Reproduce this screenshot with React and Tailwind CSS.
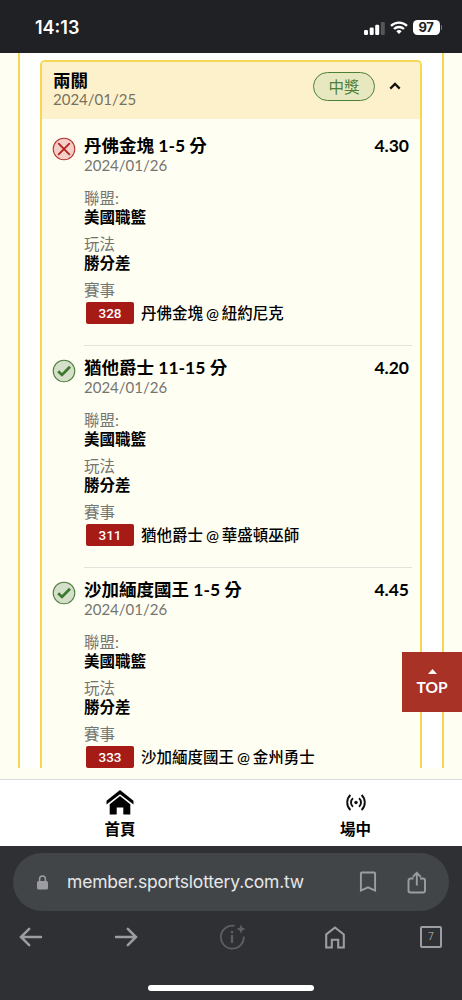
import { Fragment } from 'react';

const legs = [
  { id: 1, hit: false, title: '丹佛金塊 1-5 分', odds: '4.30', code: '328', match: '丹佛金塊 @ 紐約尼克' },
  { id: 2, hit: true, title: '猶他爵士 11-15 分', odds: '4.20', code: '311', match: '猶他爵士 @ 華盛頓巫師' },
  { id: 3, hit: true, title: '沙加緬度國王 1-5 分', odds: '4.45', code: '333', match: '沙加緬度國王 @ 金州勇士' },
];

function StatusBar() {
  return (
    <div className="h-[53px] shrink-0 bg-[#202124] flex items-center justify-between pl-[35px] pr-[20px] pt-[2px] text-white font-['Inter',sans-serif]">
      <span className="text-[18px] leading-6 font-semibold">14:13</span>
      <div className="flex items-center">
        <svg width="21" height="14" viewBox="0 0 21 14" fill="#fff" className="mr-[5px]">
          <rect x="0" y="9" width="4" height="5" rx="1.2" />
          <rect x="5.7" y="6.6" width="4" height="7.4" rx="1.2" />
          <rect x="11.2" y="3.8" width="4" height="10.2" rx="1.2" />
          <rect x="16.8" y="1" width="4" height="13" rx="1.2" fill="#55565a" />
        </svg>
        <svg width="18" height="13" viewBox="0 0 18 13" fill="none" stroke="#fff" strokeWidth="2.3" className="mr-[5px]">
          <path d="M1 4.9a11.6 11.6 0 0 1 16 0" />
          <path d="M4 8a7.2 7.2 0 0 1 10 0" />
          <path d="M9 13 6.3 10.2a3.9 3.9 0 0 1 5.4 0z" fill="#fff" stroke="none" />
        </svg>
        <span className="w-[27px] h-[15px] rounded-[4.5px] bg-white text-[#202124] text-[13px] leading-[15px] font-bold text-center tracking-[-0.3px]">
          97
        </span>
        <span className="ml-px w-[1.5px] h-[5px] rounded-r bg-[#77787b]" />
      </div>
    </div>
  );
}

function ResultIcon({ hit }) {
  return (
    <svg width="24" height="24" viewBox="0 0 24 24" fill="none" className="shrink-0 mt-[13px]">
      <circle cx="12" cy="12" r="10.8" fill={hit ? '#d5dfc9' : '#f3cfc8'} stroke={hit ? '#4e8040' : '#b5332c'} strokeWidth="1.1" />
      {hit ? (
        <path d="m6.2 12.2 3.8 3.7 8-8.1" stroke="#3a7a2d" strokeWidth="2.8" />
      ) : (
        <path d="m6.2 6.2 11.6 11.6M17.8 6.2 6.2 17.8" stroke="#b3241e" strokeWidth="1.9" />
      )}
    </svg>
  );
}

function Field({ label, value }) {
  return (
    <Fragment>
      <div className="text-[15.5px] leading-[19px] text-[#757570]">{label}</div>
      <div className="text-[15.5px] leading-[19px] font-bold text-black mb-[8px]">{value}</div>
    </Fragment>
  );
}

function Leg({ leg, last }) {
  return (
    <div className="flex h-[222px] pl-[10px] pr-[8px]">
      <ResultIcon hit={leg.hit} />
      <div className={`ml-[8px] flex-1 h-full pt-[11px] border-b ${last ? 'border-transparent' : 'border-[#e4e4df]'}`}>
        <div className="flex justify-between pr-[3px] text-[17.5px] leading-[22px] font-bold text-black">
          <span className="whitespace-nowrap">{leg.title}</span>
          <span>{leg.odds}</span>
        </div>
        <div className="text-[15px] leading-[16px] text-[#757570]">2024/01/26</div>
        <div className="mt-[16px]">
          <Field label="聯盟:" value="美國職籃" />
          <Field label="玩法" value="勝分差" />
          <div className="text-[15.5px] leading-[18px] text-[#757570]">賽事</div>
        </div>
        <div className="flex items-center mt-[3px] ml-[2px]">
          <span className="w-12 h-[22px] rounded-[2px] bg-[#a61b16] text-white text-[13.5px] leading-[22px] font-medium text-center font-['Roboto',sans-serif]">
            {leg.code}
          </span>
          <span className="ml-[7px] text-[15.5px] leading-[22px] font-medium text-black whitespace-nowrap [word-spacing:-1px]">
            {leg.match}
          </span>
        </div>
      </div>
    </div>
  );
}

function BetCard() {
  return (
    <div className="mx-5 mt-[7px] h-[708px] overflow-hidden border-2 border-b-0 border-[#f4d855] rounded-t-[5px] bg-[#fffef3]">
      <div className="h-[57px] bg-[#fdf1cc] flex items-start justify-between pl-[11px] pr-[18px] pt-[8px]">
        <div>
          <div className="text-[17.5px] leading-[21px] font-bold text-black">兩關</div>
          <div className="text-[15px] leading-[16px] text-[#77725f]">2024/01/25</div>
        </div>
        <div className="flex items-center mt-[2px]">
          <span className="w-[62px] h-[29px] rounded-full border border-[#4b8038] bg-[#e8e8c0] text-[#4b8038] text-[15.5px] leading-[28px] text-center">
            中獎
          </span>
          <svg width="12" height="8" viewBox="0 0 12 8" fill="none" stroke="#111" strokeWidth="2.2" className="ml-[14px] mr-px -mt-[2px]">
            <path d="m1.3 6.6 4.7-4.7 4.7 4.7" />
          </svg>
        </div>
      </div>
      <div className="pt-[5px]">
        {legs.map((leg, i) => (
          <Leg key={leg.id} leg={leg} last={i === legs.length - 1} />
        ))}
      </div>
    </div>
  );
}

function TabBar() {
  return (
    <div className="h-[67px] shrink-0 grid grid-cols-2 border-t border-[#dcdcdc] bg-white text-black text-[15.5px] leading-5 font-bold">
      <div className="flex flex-col items-center pl-[9px] pt-[10px]">
        <svg width="28" height="25" viewBox="0 0 28 25">
          <path d="M14 0 .5 10.8v3.8L14 4.2l13.5 10.4v-3.8z" />
          <path d="M14 6 3.7 14.2v10.3h7v-7h6.6v7h7V14.2z" />
        </svg>
        <span className="mt-[4px]">首頁</span>
      </div>
      <div className="flex flex-col items-center pl-[18px] pt-[14px]">
        <svg width="20" height="17" viewBox="0 0 20 17" fill="none" stroke="#111" strokeWidth="1.9">
          <circle cx="10" cy="8.5" r="1.7" fill="#111" stroke="none" />
          <path d="M7 4.200a5.600 5.600 0 0 0 0 8.600M13 4.200a5.600 5.600 0 0 1 0 8.600" />
          <path d="M4.400 1a10.400 10.400 0 0 0 0 15M15.600 1a10.400 10.400 0 0 1 0 15" />
        </svg>
        <span className="mt-[8px]">場中</span>
      </div>
    </div>
  );
}

function BrowserBar() {
  return (
    <div className="h-[154px] shrink-0 bg-[#2f3034] pt-[7px] px-[13px] flex flex-col text-[#9b9da3]">
      <div className="h-[58px] rounded-full bg-[#424548] flex items-center pl-[24px] pr-[22px]">
        <svg width="11" height="15" viewBox="0 0 11 15" fill="none">
          <path d="M2.6 7V3.8a2.9 2.9 0 0 1 5.8 0V7" stroke="#9b9da3" strokeWidth="1.5" />
          <rect y="6" width="11" height="8.5" rx="1.6" fill="#9b9da3" />
        </svg>
        <span className="ml-[19px] flex-1 text-[17.5px] leading-6 tracking-[-0.2px] text-[#e6e7e9] font-['Inter',sans-serif] whitespace-nowrap">
          member.sportslottery.com.tw
        </span>
        <svg width="18" height="22" viewBox="0 0 18 22" fill="none" stroke="currentColor" strokeWidth="1.9" className="mr-[30px]">
          <path d="M1.900 2.500a1 1 0 0 1 1-1h12.200a1 1 0 0 1 1 1v17l-7.100-3.100-7.100 3.100z" />
        </svg>
        <svg width="20" height="23" viewBox="0 0 20 23" fill="none" stroke="currentColor" strokeWidth="1.9">
          <path d="M6.500 7.500H3.500a2 2 0 0 0-2 2V19.500a2 2 0 0 0 2 2h12.500a2 2 0 0 0 2-2V9.500a2 2 0 0 0-2-2H13M9.800 14.500V2M5.800 5.800l4-4 4 4" />
        </svg>
      </div>
      <div className="mt-[13px] h-[26px] flex items-center justify-between pl-[6px] pr-[7px]">
        <svg width="24" height="20" viewBox="0 0 24 20" fill="none" stroke="currentColor" strokeWidth="2.5" strokeLinecap="round">
          <path d="M22 10H2.500M10.200 1.800 2 10l8.200 8.200" />
        </svg>
        <svg width="24" height="20" viewBox="0 0 24 20" fill="none" stroke="currentColor" strokeWidth="2.5" strokeLinecap="round" className="ml-[9px]">
          <path d="M2 10h19.500M13.800 1.800 22 10l-8.200 8.200" />
        </svg>
        <svg width="27" height="26" viewBox="0 0 27 26" fill="none" stroke="#5d5f64" strokeWidth="1.8" className="ml-[19px]">
          <path d="M15.500 1.900A11.500 11.500 0 1 0 24.800 12.500" />
          <path d="M13 11v8M13 7v2.200" strokeWidth="2.3" />
          <path d="m22 .5 1.300 3.300 3.300 1.300-3.300 1.300L22 9.700l-1.300-3.300-3.300-1.300 3.300-1.300z" fill="#5d5f64" stroke="none" />
        </svg>
        <svg width="20" height="23" viewBox="0 0 20 23" fill="none" stroke="currentColor" strokeWidth="2.1" className="ml-[18px]">
          <path d="M1.200 8.400 10 1.500l8.800 6.900v13.100h-5.600v-7.700H6.800v7.700H1.200z" />
        </svg>
        <span className="w-[22px] h-[22px] ml-[13px] rounded-[2px] border-2 border-current text-[10.5px] leading-[18px] text-center font-['Roboto',sans-serif]">
          7
        </span>
      </div>
      <div className="mt-[35px] mx-auto w-[166px] h-[6px] rounded-full bg-white" />
    </div>
  );
}

export default function App() {
  return (
    <div className="relative w-[462px] h-[1000px] overflow-hidden flex flex-col bg-[#fffef3] font-['Lato','Noto_Sans_CJK_TC',sans-serif]">
      <StatusBar />
      <div className="h-[726px] shrink-0">
        <div className="mx-[18px] h-[715px] border-x-2 border-[#f4d855] bg-white flow-root">
          <BetCard />
        </div>
      </div>
      <TabBar />
      <BrowserBar />

      {/* back to top */}
      <button className="absolute right-0 top-[652px] w-[60px] h-[60px] bg-[#a83226] text-white flex flex-col items-center pt-[17px]">
        <svg width="9" height="5" viewBox="0 0 9 5" fill="#fff">
          <path d="M4.5 0 9 5H0z" />
        </svg>
        <span className="mt-[3px] text-[15.5px] leading-5 font-bold">TOP</span>
      </button>
    </div>
  );
}
